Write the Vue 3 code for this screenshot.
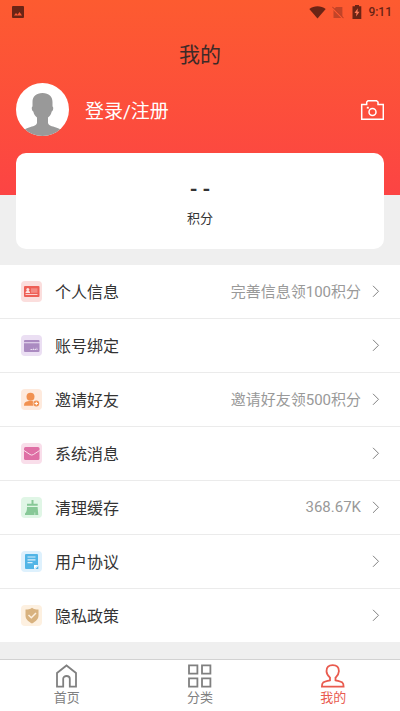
<script setup>
const items = [
  { id: 'profile', label: '个人信息', detail: '完善信息领100积分', bg: '#fbdedd' },
  { id: 'account', label: '账号绑定', detail: '', bg: '#ebdff3' },
  { id: 'invite', label: '邀请好友', detail: '邀请好友领500积分', bg: '#feeadd' },
  { id: 'message', label: '系统消息', detail: '', bg: '#f9deea' },
  { id: 'cache', label: '清理缓存', detail: '368.67K', bg: '#e0f6e6' },
  { id: 'terms', label: '用户协议', detail: '', bg: '#def1fd' },
  { id: 'privacy', label: '隐私政策', detail: '', bg: '#fdf0e0' },
]
const tabs = [
  { id: 'home', label: '首页', active: false },
  { id: 'category', label: '分类', active: false },
  { id: 'mine', label: '我的', active: true },
]
</script>

<template>
  <div class="page">
    <header class="header">
      <div class="status">
        <svg class="status-picture" width="12" height="12" viewBox="0 0 12 12">
          <rect width="12" height="12" rx="1" fill="#6b2415" />
          <path d="M2 9.5 4 7l1.5 1.7L7.5 6 10 9.5z" fill="#fc5932" />
        </svg>
        <svg width="17" height="13" viewBox="0 0 17 13">
          <path d="M0.3 3C5-.7 12-.7 16.7 3L8.500 12.600z" fill="#6b2415" />
        </svg>
        <svg class="status-sim" width="12" height="13" viewBox="0 0 12 13">
          <path d="M4 1h6.400v11H1.500V3.500z" fill="#c24428" />
          <path d="M0 1.600 11.400 13" stroke="#fc5932" stroke-width="1.600" />
          <path d="M0.300 .8 11.600 12.200" stroke="#b03d24" stroke-width="1" />
        </svg>
        <svg class="status-battery" width="10" height="14" viewBox="0 0 10 14">
          <path d="M3 0h4v1.200h2.300V14H.5V1.200H3z" fill="#6b2415" />
          <path d="M5.800 3.200 2.500 8h2l-.5 3.500L7.500 6.700h-2z" fill="#fc7a58" />
        </svg>
        <span class="time">9:11</span>
      </div>
      <h1 class="title">我的</h1>
      <div class="profile">
        <svg class="avatar" viewBox="0 0 53 53">
          <defs><clipPath id="avatar-clip"><circle cx="26.5" cy="26.5" r="26.5" /></clipPath></defs>
          <circle cx="26.5" cy="26.5" r="26.5" fill="#fff" />
          <g clip-path="url(#avatar-clip)" fill="#999">
            <path d="M26.500 10c6.500 0 10 3.500 10 9v4.500c1.200.3.900 4.500-.8 5-.7 3-1.500 4.500-3.700 6v5c0 2.500 2.500 3.500 6.500 4.500 4.500 1.200 6.500 2.500 8.500 4.500V55H6v-6.500c2-2 4-3.300 8.500-4.500 4-1 6.500-2 6.500-4.500v-5c-2-1.500-3-3-3.700-6-1.700-.5-2-4.700-.8-5V19c0-5.500 3.500-9 10-9z" />
          </g>
        </svg>
        <a class="login" href="#login">登录/注册</a>
        <button class="camera" type="button" aria-label="拍照">
          <svg width="24" height="22" viewBox="0 0 24 22" fill="none" stroke="#fff" stroke-width="1.500">
            <path d="M1.700 5.500h5V3L8 1.700h8.500L18 3v2.500h5.300v14.800H1.700z" />
            <circle cx="12.500" cy="13" r="3.500" />
            <path d="M6.800 8.700h2" stroke-width="1.800" />
          </svg>
        </button>
      </div>
    </header>

    <section class="card">
      <strong class="points">- -</strong>
      <span class="points-label">积分</span>
    </section>

    <nav class="menu">
      <a v-for="item in items" :key="item.id" class="row" :href="'#' + item.id">
        <svg class="row-icon" width="21" height="21" viewBox="0 0 21 21">
          <rect width="21" height="21" rx="4" :fill="item.bg" />
          <g v-if="item.id === 'profile'">
            <rect x="3" y="5" width="15.500" height="11" rx="1" fill="#ee5f56" />
            <circle cx="6.800" cy="8.400" r="1.500" fill="#fde5e3" />
            <path d="M4.500 12c0-3 4.600-3 4.600 0z" fill="#fde5e3" />
            <path d="M10 7.300h6.500v4.500H10z" fill="#f48a83" />
            <path d="M4.500 13.500h12" stroke="#fbd0cd" />
          </g>
          <g v-else-if="item.id === 'account'">
            <path d="M3 7.300V6q0-1 1-1h13.500q1 0 1 1v1.300zM3 8.300h15.500V16q0 1-1 1H4q-1 0-1-1z" fill="#ab8bc1" />
            <path d="M9.500 14.500h7" stroke="#eadff1" stroke-dasharray="1.500 .5" />
            <path d="M12 13.300h1M14.500 13.300h2" stroke="#c9b4d8" />
          </g>
          <g v-else-if="item.id === 'invite'" fill="#f19150">
            <circle cx="9.500" cy="7.800" r="4" />
            <path d="M3 16.800c0-4 2.500-4.800 6.500-4.800s5.500.8 5.500 4.800z" />
            <circle cx="15.300" cy="14.500" r="3.500" fill="#feeadd" />
            <circle cx="15.300" cy="14.500" r="2.900" />
            <path d="M15.300 12.800v3.400M13.600 14.500H17" stroke="#fff" />
          </g>
          <g v-else-if="item.id === 'message'">
            <rect x="3" y="4" width="15.500" height="13" rx="1.500" fill="#df6fa5" />
            <path d="M3 7.500 9 11.500q1.700 1.200 3.500 0l6-4" fill="none" stroke="#f9deea" />
          </g>
          <g v-else-if="item.id === 'cache'" fill="#87c897">
            <path d="M10.500 3h2v3.700h4.200v2.100H6V6.700h4.500zM6 9.900h10.600l.7 8H4v-1.300c1.600-1.500 2-3.500 2-6.700z" />
            <path d="M13.800 15.500v2.500" stroke="#b9e3c3" />
          </g>
          <g v-else-if="item.id === 'terms'">
            <path d="M4 4q0-1 1-1h11q1 0 1 1v10L13 18H5q-1 0-1-1z" fill="#52b5e6" />
            <path d="M6.500 6h8M6.500 8.800h8M6.500 11.700h5" stroke="#d9f0fc" stroke-width="1.200" />
            <path d="M13 18v-4h4.200z" fill="#fff" />
            <path d="M14.500 18 17.300 15v3z" fill="#52b5e6" />
          </g>
          <g v-else>
            <path d="M11 2.700c2 1.400 4 1.900 6.500 1.900v6c0 3.500-2.500 6-6.500 7.900-4-1.900-6.500-4.400-6.500-7.900v-6c2.500 0 4.500-.5 6.500-1.900z" fill="#d8b27f" />
            <path d="m7.500 10 2.800 2.700 4.700-4.700" fill="none" stroke="#fdf0e0" stroke-width="1.500" />
          </g>
        </svg>
        <span class="row-label">{{ item.label }}</span>
        <span class="row-detail">{{ item.detail }}</span>
        <svg width="8" height="13" viewBox="0 0 8 13" fill="none" stroke="#808080">
          <path d="m1 .8 5.500 5.500L1 11.800" />
        </svg>
      </a>
    </nav>

    <nav class="tabs">
      <a v-for="tab in tabs" :key="tab.id" class="tab" :class="{ active: tab.active }" :href="'#' + tab.id">
        <svg width="24" height="24" viewBox="0 0 24 24" fill="none" stroke="currentColor" stroke-width="1.800">
          <path v-if="tab.id === 'home'" d="M2 9 11.500 1.500 21 9v13.700h-6.200v-8c0-3.600-6.600-3.600-6.600 0v8H2z" />
          <path v-else-if="tab.id === 'category'" d="M1 1.300h8.400v8.400H1zM14 1.300h8.400v8.400H14zM1 14.300h8.400v8.400H1zM14 14.300h8.400v8.400H14z" />
          <path v-else d="M11.700 1.200c3.800 0 6.200 2.400 6.200 6 0 3-1.500 4.500-3.400 6.500v2.600c2.500.8 5.400 1.200 6.900 2.300 1 .8 1.200 1.600 1.200 4.100H.9c0-2.500.2-3.300 1.200-4.100 1.500-1.100 4.400-1.500 6.900-2.300v-2.600C7 11.700 5.500 10.200 5.500 7.200c0-3.600 2.400-6 6.200-6z" />
        </svg>
        <span>{{ tab.label }}</span>
      </a>
    </nav>
  </div>
</template>

<style>
body {
  margin: 0;
  background: #efefef;
}
</style>

<style scoped>
.page {
  display: flex;
  flex-direction: column;
  min-height: 100vh;
  background: #efefef;
  color: #333;
  font-family: Roboto, "Noto Sans CJK SC", sans-serif;
}
a {
  color: inherit;
  text-decoration: none;
}
.header {
  padding-bottom: 59px;
  background: linear-gradient(#fd5b30, #fc4444);
}
.status {
  display: flex;
  align-items: center;
  height: 24px;
  padding: 0 8px 0 12px;
}
.status-picture {
  margin-right: auto;
}
.status-sim {
  margin-left: 6px;
}
.status-battery {
  margin-left: 8px;
}
.time {
  margin-left: 6px;
  color: #6b2415;
  font-size: 12px;
  font-weight: 500;
}
.title {
  margin: 0;
  padding-top: 3px;
  color: #3c2a28;
  font-size: 21px;
  font-weight: 400;
  line-height: 56px;
  text-align: center;
}
.profile {
  display: flex;
  align-items: center;
  gap: 16px;
  padding: 0 16px;
}
.avatar {
  width: 53px;
  height: 53px;
}
.login {
  color: #fff;
  font-size: 19px;
}
.camera {
  display: flex;
  margin-left: auto;
  padding: 0;
  border: 0;
  background: none;
}
.card {
  display: flex;
  flex-direction: column;
  align-items: center;
  gap: 7px;
  margin: -42px 16px 16px;
  padding: 23px 0 20px;
  border-radius: 10px;
  background: #fff;
}
.points {
  font-size: 20px;
  font-weight: 700;
  line-height: 26px;
}
.points-label {
  font-size: 13px;
  line-height: 20px;
}
.menu {
  background: #fff;
}
.row {
  display: flex;
  align-items: center;
  height: 53px;
  padding: 0 20px 0 21px;
  border-bottom: 1px solid #ebebeb;
}
.row:last-child {
  border-bottom: 0;
}
.row-label {
  flex: 1;
  margin-left: 13px;
  padding-bottom: 2px;
  font-size: 16px;
}
.row-detail {
  margin-right: 11px;
  padding-bottom: 2px;
  color: #999;
  font-size: 15px;
}
.tabs {
  display: flex;
  margin-top: auto;
  border-top: 1px solid #d2d2d2;
  background: #fff;
}
.tab {
  display: flex;
  flex: 1;
  flex-direction: column;
  align-items: center;
  padding: 4px 0;
  color: #808080;
  font-size: 13px;
  line-height: 19px;
}
.tab.active {
  color: #e95b4f;
}
</style>
